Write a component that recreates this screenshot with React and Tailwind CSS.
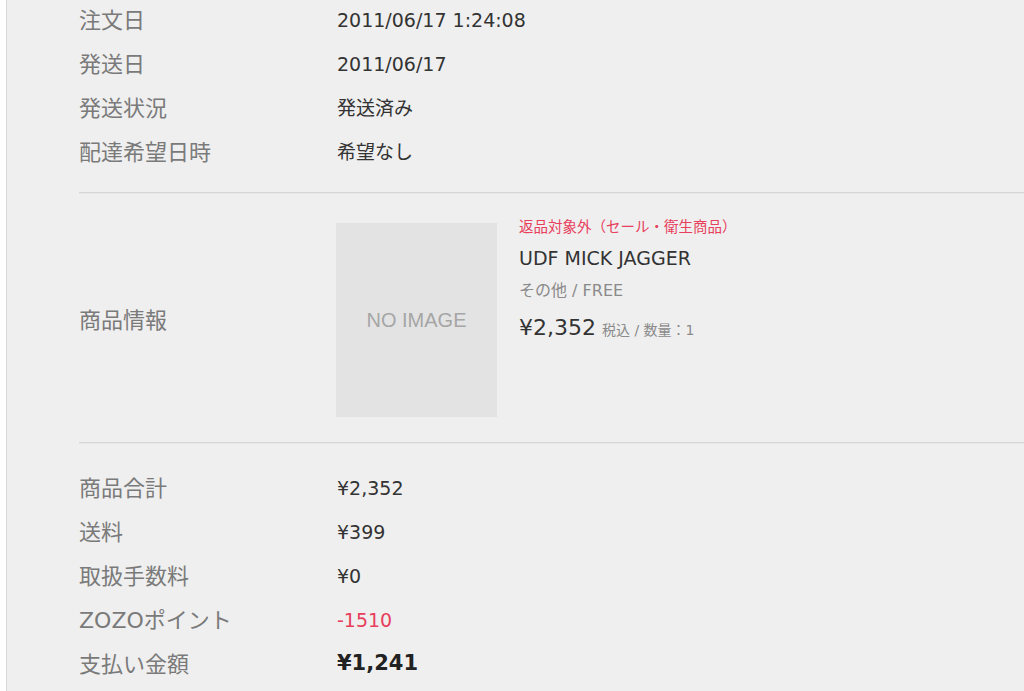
const font = { fontFamily: '"DejaVu Sans", "Noto Sans CJK JP", sans-serif' };

const topRows = [
  { label: "注文日", value: "2011/06/17 1:24:08" },
  { label: "発送日", value: "2011/06/17" },
  { label: "発送状況", value: "発送済み" },
  { label: "配達希望日時", value: "希望なし" },
];

const totals = [
  { label: "商品合計", value: "¥2,352" },
  { label: "送料", value: "¥399" },
  { label: "取扱手数料", value: "¥0" },
  { label: "ZOZOポイント", value: "-1510", tone: "red" },
  { label: "支払い金額", value: "¥1,241", tone: "bold" },
];

function Row({ label, value, tone }) {
  return (
    <div className="flex items-center h-[44px]">
      <div className="w-[258px] shrink-0 text-[22px] text-[#7a7a7a]">{label}</div>
      <div
        className={
          tone === "red"
            ? "text-[19px] text-[#e8405c]"
            : tone === "bold"
            ? "text-[21px] font-bold text-[#222]"
            : "text-[19px] text-[#333]"
        }
      >
        {value}
      </div>
    </div>
  );
}

function Divider() {
  return <div className="border-t border-[#d6d6d6] border-b border-b-[#e6e6e6]" />;
}

export default function App() {
  return (
    <div className="min-h-[691px] bg-white pl-[6px]" style={font}>
      <div className="min-h-[691px] bg-[#efefef] border-l border-[#d9d9d9] pl-[72px] overflow-hidden">
        <div className="-mt-[2px] pb-[18px]">
          {topRows.map(r => (
            <Row key={r.label} {...r} />
          ))}
        </div>
        <Divider />
        <div className="flex items-center pt-[29px] pb-[25px]">
          <div className="w-[257px] shrink-0 text-[22px] text-[#7a7a7a]">商品情報</div>
          <div className="flex items-start">
            <div className="w-[161px] h-[194px] bg-[#e3e3e3] flex items-center justify-center text-[20px] text-[#a6a6a6] font-['Liberation_Sans']">
              NO IMAGE
            </div>
            <div className="ml-[22px] -mt-[6px]">
              <div className="text-[14.5px] text-[#e8405c] leading-[20px]">返品対象外（セール・衛生商品）</div>
              <div className="text-[19px] text-[#333] leading-[24px] mt-[9px]">UDF MICK JAGGER</div>
              <div className="text-[16px] text-[#8a8a8a] leading-[20px] mt-[11px]">その他 / FREE</div>
              <div className="flex items-baseline mt-[12px]">
                <span className="text-[22px] text-[#333] leading-[30px]">¥2,352</span>
                <span className="text-[14px] text-[#8a8a8a] ml-[6px]">税込 / 数量：1</span>
              </div>
            </div>
          </div>
        </div>
        <Divider />
        <div className="pt-[22px]">
          {totals.map(r => (
            <Row key={r.label} {...r} />
          ))}
        </div>
      </div>
    </div>
  );
}
